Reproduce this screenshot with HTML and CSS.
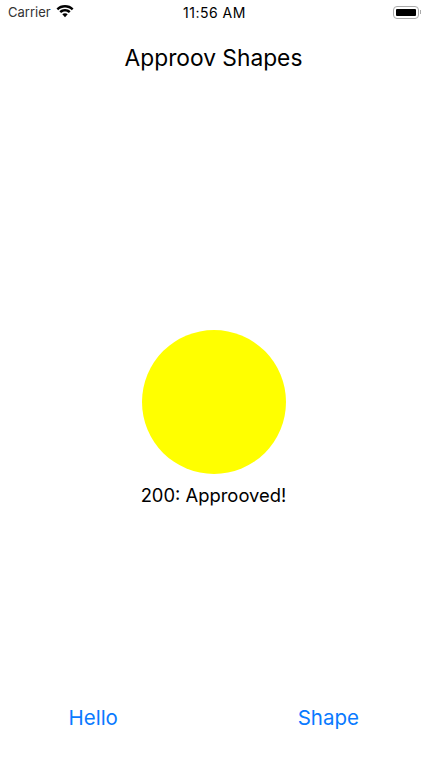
FILE: index.html
```html
<!DOCTYPE html>
<html lang="en">
  <head>
    <meta charset="utf-8" />
    <title>Approov Shapes</title>
    <link rel="stylesheet" href="styles.css">
  </head>
  <body>
    <header class="status-bar">
      <div class="status-left">
        <span>Carrier</span>
        <svg class="wifi" width="18" height="13" viewBox="0 0 18 13">
          <path d="M9 2.400c2.600 0 5 1 6.800 2.800l1.700-1.800C15.300 1.200 12.300 0 9 0S2.700 1.200.5 3.400l1.700 1.800C4 3.400 6.400 2.400 9 2.400z" />
          <path d="M9 6.500c1.500 0 2.900.6 3.900 1.600l1.700-1.800C13.100 4.900 11.200 4 9 4s-4.100.9-5.600 2.300l1.700 1.800c1-1 2.400-1.600 3.900-1.600z" />
          <path d="M9 8.200c-1.100 0-2 .4-2.700 1.100L9 12.300l2.700-3c-.7-.7-1.600-1.100-2.700-1.100z" />
        </svg>
      </div>
      <span class="status-time">11:56 AM</span>
      <div class="status-right">
        <div class="battery"><div class="battery-level"></div></div>
        <div class="battery-cap"></div>
      </div>
    </header>
    <h1 class="title">Approov Shapes</h1>
    <main class="content">
      <div class="shape"></div>
      <p class="result">200: Approoved!</p>
    </main>
    <footer class="actions">
      <a class="action" href="#">Hello</a>
      <a class="action" href="#">Shape</a>
    </footer>
  </body>
</html>
```
FILE: styles.css
```css
html,
body {
  margin: 0;
  padding: 0;
  height: 760px;
  background-color: white;
  color: black;
  font-family: Inter, "Liberation Sans", sans-serif;
  overflow: hidden;
}
body {
  display: flex;
  flex-direction: column;
}
.status-bar {
  display: grid;
  grid-template-columns: 1fr auto 1fr;
  align-items: center;
  height: 24px;
  padding: 0 6px 0 8px;
  font-size: 13px;
}
.status-left {
  display: flex;
  align-items: center;
  gap: 5px;
  color: #333;
}
.status-time {
  font-size: 14px;
  letter-spacing: 0.5px;
}
.wifi {
  fill: black;
  margin-bottom: 2px;
}
.status-right {
  display: flex;
  justify-content: flex-end;
  align-items: center;
}
.battery {
  width: 26px;
  height: 13px;
  padding: 2px;
  border: 1px solid #aaa;
  border-radius: 4px;
  box-sizing: border-box;
}
.battery-level {
  height: 100%;
  border-radius: 1px;
  background-color: black;
}
.battery-cap {
  width: 1px;
  height: 4px;
  margin-left: 1px;
  background-color: #aaa;
}
.title {
  margin: 18px 0 0;
  font-size: 22.75px;
  font-weight: 400;
  line-height: 32px;
  text-align: center;
}
.content {
  display: flex;
  flex: 1;
  flex-direction: column;
  align-items: center;
  padding-top: 256px;
}
.shape {
  width: 144px;
  height: 144px;
  border-radius: 50%;
  background-color: #ffff00;
}
.result {
  margin: 8px 0 0;
  font-size: 18.4px;
  line-height: 26px;
}
.actions {
  display: flex;
  justify-content: space-between;
  padding: 0 68px 28px 68.500px;
}
.action {
  color: #0a7aff;
  font-size: 20.5px;
  line-height: 28px;
  text-decoration: none;
}
```
